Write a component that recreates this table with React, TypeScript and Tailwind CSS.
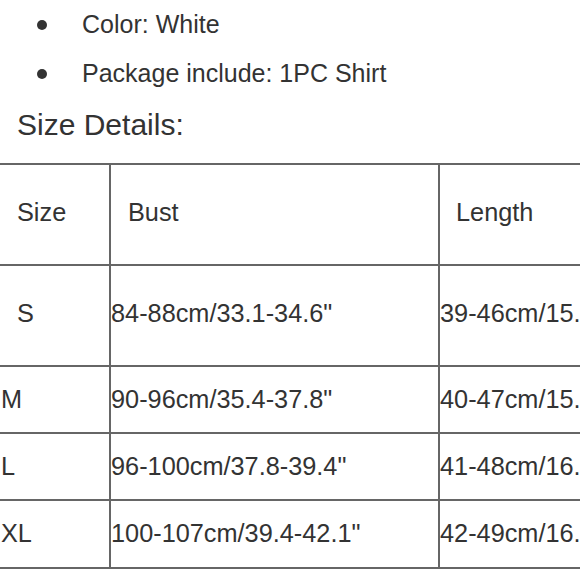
const bullets = ["Color: White", "Package include: 1PC Shirt"];

interface SizeRow {
  size: string;
  bust: string;
  length: string;
  tall?: boolean;
  padSize?: boolean;
}

const rows: SizeRow[] = [
  { size: "S", bust: "84-88cm/33.1-34.6\"", length: "39-46cm/15.4-18.1\"", tall: true, padSize: true },
  { size: "M", bust: "90-96cm/35.4-37.8\"", length: "40-47cm/15.7-18.5\"" },
  { size: "L", bust: "96-100cm/37.8-39.4\"", length: "41-48cm/16.1-18.9\"" },
  { size: "XL", bust: "100-107cm/39.4-42.1\"", length: "42-49cm/16.5-19.3\"" },
];

export default function App() {
  return (
    <div className="w-full h-[580px] overflow-hidden bg-white text-[#333] font-['Liberation_Sans',Arial,sans-serif]">
      <ul>
        {bullets.map((b) => (
          <li key={b} className="flex items-center h-[49px] pl-[37px] text-[25px] leading-[49px]">
            <span className="w-[10px] h-[10px] rounded-full bg-[#333] shrink-0" />
            <span className="ml-[35px] whitespace-nowrap">{b}</span>
          </li>
        ))}
      </ul>
      <h2 className="pt-[3px] pl-[17px] text-[30px] leading-[48px] whitespace-nowrap">Size Details:</h2>

      <div className="mt-[14px] w-[800px] text-[25.3px] border-b-2 border-[#666]">
        {/* header */}
        <div className="flex h-[101px] border-t-2 border-[#666]">
          <div className="w-[109px] flex items-center pb-[4px] pl-[17px]">Size</div>
          <div className="w-[329px] flex items-center pb-[4px] pl-[17px] border-l-2 border-[#666]">Bust</div>
          <div className="flex-1 flex items-center pb-[4px] pl-[16px] border-l-2 border-[#666]">Length</div>
        </div>
        {rows.map((r, i) => {
          const pad = r.tall ? "pb-[3px]" : "";
          return (
            <div
              key={r.size}
              className={`flex border-t-2 border-[#666] whitespace-nowrap ${
                r.tall ? "h-[101px]" : i === rows.length - 1 ? "h-[68px]" : "h-[67px]"
              }`}
            >
              <div className={`w-[109px] flex items-center ${pad} ${r.padSize ? "pl-[17px]" : "pl-[1px]"}`}>
                {r.size}
              </div>
              <div className={`w-[329px] flex items-center ${pad} border-l-2 border-[#666]`}>{r.bust}</div>
              <div className={`flex-1 flex items-center ${pad} border-l-2 border-[#666]`}>{r.length}</div>
            </div>
          );
        })}
      </div>
    </div>
  );
}
